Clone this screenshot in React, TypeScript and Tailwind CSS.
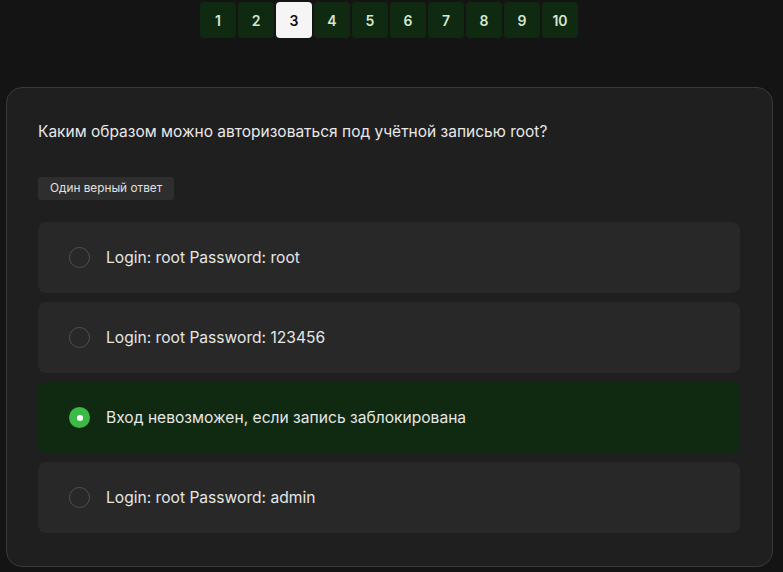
import React from "react";

const options = [
  "Login: root Password: root",
  "Login: root Password: 123456",
  "Вход невозможен, если запись заблокирована",
  "Login: root Password: admin",
];

export default function App() {
  const selected = 2;
  return (
    <div
      className="w-[783px] h-[572px] bg-[#141414] overflow-hidden"
      style={{ fontFamily: "Inter, 'Noto Sans', sans-serif" }}
    >
      <div className="flex justify-center gap-[2px] pt-[2px] pr-[5px]">
        {Array.from({ length: 10 }, (_, i) => i + 1).map((n) => (
          <div
            key={n}
            className={
              n === 3
                ? "w-[36px] h-[36px] rounded-[4px] bg-[#f5f5f5] text-[#111] flex items-center justify-center text-[14px] font-semibold"
                : "w-[36px] h-[36px] rounded-[4px] bg-[#0f2a10] text-[#d6e6d0] flex items-center justify-center text-[14px] font-semibold"
            }
          >
            {n}
          </div>
        ))}
      </div>
      <div className="mt-[49px] ml-[6px] w-[767px] h-[480px] rounded-[16px] border border-[#3a3a3a] bg-[#1f1f1f] px-[31px] pt-[34px]">
        <div className="text-[15.5px] leading-[20px] text-[#e8e8e8]">
          Каким образом можно авторизоваться под учётной записью root?
        </div>
        <div className="mt-[35px] inline-flex h-[23px] items-center rounded-[3px] bg-[#2e2e2e] px-[12px] text-[11.8px] text-[#e0e0e0]">
          Один верный ответ
        </div>
        <div className="mt-[22px] flex flex-col gap-[9px] w-[702px]">
          {options.map((o, i) => (
            <div
              key={i}
              className={
                i === selected
                  ? "h-[71px] rounded-[8px] bg-[#102a12] flex items-center pl-[31px]"
                  : "h-[71px] rounded-[8px] bg-[#282828] flex items-center pl-[31px]"
              }
            >
              {i === selected ? (
                <div className="w-[21px] h-[21px] rounded-full bg-[#3dba45] flex items-center justify-center">
                  <div className="w-[6px] h-[6px] rounded-full bg-white" />
                </div>
              ) : (
                <div className="w-[21px] h-[21px] rounded-full border border-[#505050]" />
              )}
              <span className="ml-[16px] text-[15.6px] text-[#e6e6e6]">{o}</span>
            </div>
          ))}
        </div>
      </div>
    </div>
  );
}
